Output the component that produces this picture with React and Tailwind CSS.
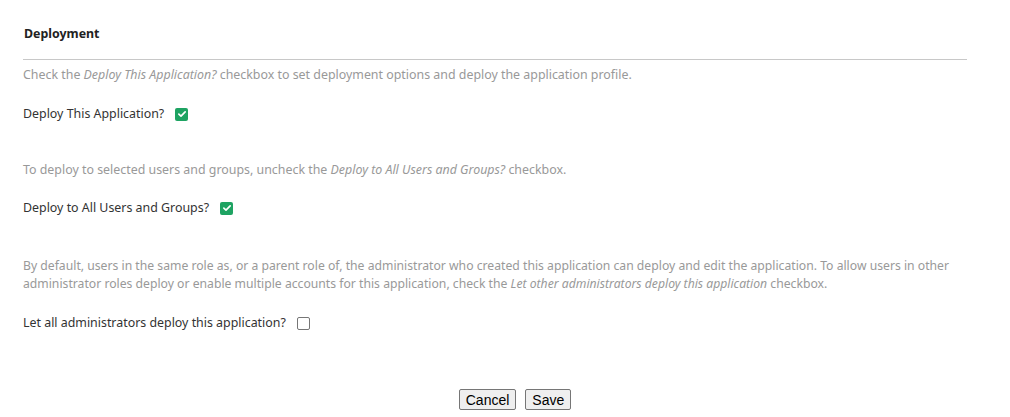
import React from "react";

function GreenCheck() {
  return (
    <span className="inline-flex items-center justify-center w-[13px] h-[13px] rounded-[2px] bg-[#1ea362] align-middle">
      <svg viewBox="0 0 12 12" className="w-[10px] h-[10px]">
        <path d="M2.2 6.2 L4.8 8.6 L9.8 3.4" fill="none" stroke="white" strokeWidth="2" strokeLinecap="round" strokeLinejoin="round" />
      </svg>
    </span>
  );
}

function EmptyCheck() {
  return <span className="inline-block w-[13px] h-[13px] rounded-[2px] border border-[#767676] bg-white align-middle" />;
}

export default function App() {
  return (
    <div className="w-[1010px] h-[417px] bg-white text-[12.4px] leading-[18px] text-[#333]" style={{ fontFamily: '"Noto Sans", "Open Sans", sans-serif' }}>
      <div className="pl-[23px] pr-[43px]">
        <div className="pt-[25px] pb-[16px] pl-[1px] font-bold text-[#222]">Deployment</div>
        <div className="border-t border-[#c8c8c8]" />
        <div className="mt-[6px] text-[#999]">
          Check the <i>Deploy This Application?</i> checkbox to set deployment options and deploy the application profile.
        </div>
        <div className="mt-[21px] flex items-center gap-[11px]">
          <span>Deploy This Application?</span>
          <GreenCheck />
        </div>
        <div className="mt-[38px] text-[#999]">
          To deploy to selected users and groups, uncheck the <i>Deploy to All Users and Groups?</i> checkbox.
        </div>
        <div className="mt-[20px] flex items-center gap-[11px]">
          <span>Deploy to All Users and Groups?</span>
          <GreenCheck />
        </div>
        <div className="mt-[40px] text-[12.2px] text-[#999]">
          By default, users in the same role as, or a parent role of, the administrator who created this application can deploy and edit the application. To allow users in other administrator roles deploy or enable multiple accounts for this application, check the <i>Let other administrators deploy this application</i> checkbox.
        </div>
        <div className="mt-[21px] flex items-center gap-[11px]">
          <span>Let all administrators deploy this application?</span>
          <EmptyCheck />
        </div>
      </div>
      <div className="mt-[57px] flex justify-center gap-[9px] pl-[20px]" style={{ fontFamily: '"Liberation Sans", Arial, sans-serif' }}>
        <button className="h-[21px] px-[6px] text-[14px] leading-none text-black bg-[#efefef] border border-[#767676] rounded-[2px]">Cancel</button>
        <button className="h-[21px] px-[6px] text-[14px] leading-none text-black bg-[#efefef] border border-[#767676] rounded-[2px]">Save</button>
      </div>
    </div>
  );
}
